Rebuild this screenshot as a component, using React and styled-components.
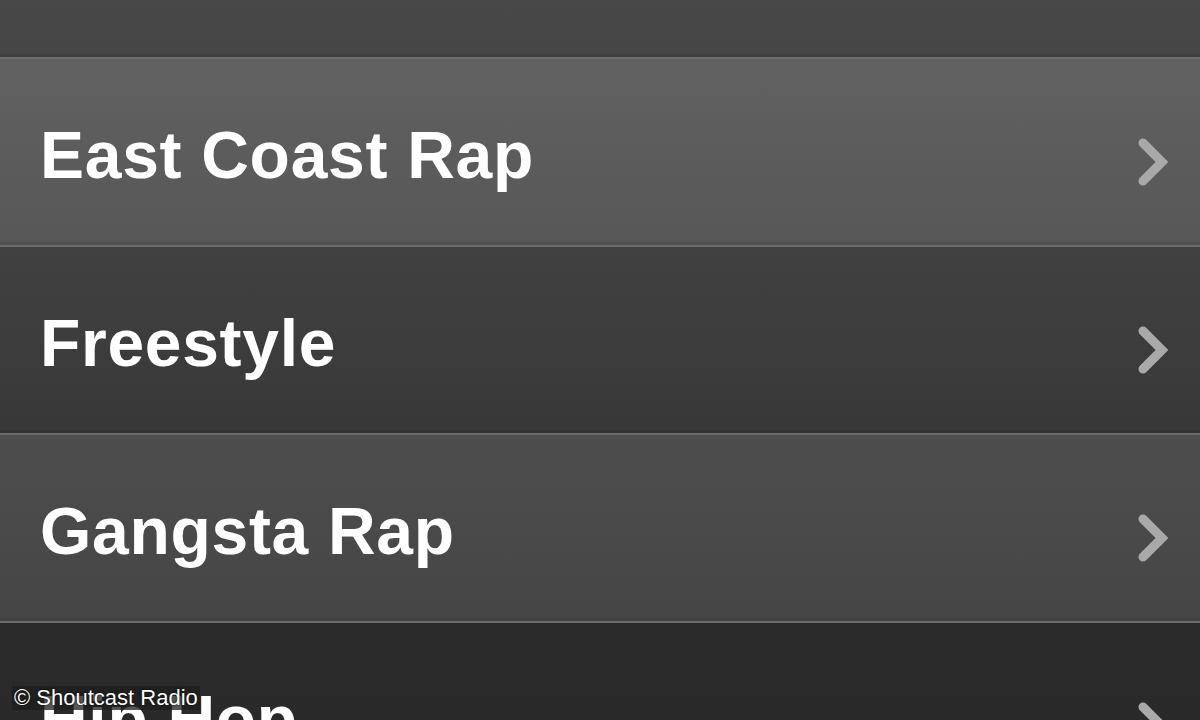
import React from 'react'
import styled, { createGlobalStyle } from 'styled-components'

const GlobalStyle = createGlobalStyle`
    html, body {
        margin: 0;
        padding: 0;
        width: 1200px;
        height: 720px;
        overflow: hidden;
        background: #2a2a2a;
        font-family: "Liberation Sans", Arial, sans-serif;
    }
`

const genres = [
    { name: 'Dirty South', tone: 'mid' },
    { name: 'East Coast Rap', tone: 'light' },
    { name: 'Freestyle', tone: 'dark' },
    { name: 'Gangsta Rap', tone: 'mid' },
    { name: 'Hip Hop', tone: 'darkest' },
]

const tones = {
    light: ['#616161', '#575757'],
    mid: ['#4d4d4d', '#464646'],
    dark: ['#414141', '#383838'],
    darkest: ['#2b2b2b', '#282828'],
}

const Chevron = () => (
    <svg width="40" height="52" viewBox="0 0 40 52">
        <path d="M10 7 L29 26 L10 45" fill="none" stroke="#a9a9a9" strokeWidth="9" strokeLinecap="round" strokeLinejoin="miter" />
    </svg>
)

const App = () => {
    return (
        <Screen>
            <GlobalStyle />
            <List>
                {genres.map((g) => (
                    <Row key={g.name} $tone={g.tone}>
                        <Label>{g.name}</Label>
                        <Arrow><Chevron /></Arrow>
                    </Row>
                ))}
            </List>
            <Credit>© Shoutcast Radio</Credit>
        </Screen>
    )
}

const Screen = styled.div`
    position: relative;
    width: 1200px;
    height: 720px;
    overflow: hidden;
    background: #2a2a2a;
`

const List = styled.div`
    display: flex;
    flex-direction: column;
    margin-top: -144px;
`

const Row = styled.div`
    flex: 0 0 188px;
    box-sizing: border-box;
    display: flex;
    align-items: center;
    justify-content: space-between;
    padding: 0 27px 0 40px;
    background: linear-gradient(${(p) => tones[p.$tone][0]}, ${(p) => tones[p.$tone][1]});
    border-top: 2px solid #6c6c6c;
    box-shadow: inset 0 -3px 0 rgba(0, 0, 0, 0.08);

    &:first-child {
        flex-basis: 201px;
    }
`

const Label = styled.div`
    color: #ffffff;
    font-family: "Liberation Sans", Arial, sans-serif;
    font-weight: 700;
    font-size: 66px;
    letter-spacing: 0.7px;
    line-height: 1;
    margin-top: 6px;
`

const Arrow = styled.div`
    display: flex;
    margin-top: 20px;
`

const Credit = styled.div`
    position: absolute;
    left: 12px;
    bottom: 10px;
    padding: 0 2px;
    color: #ffffff;
    font-family: "Liberation Sans", Arial, sans-serif;
    font-size: 22px;
    line-height: 24px;
    background: rgba(30, 30, 30, 0.75);
    text-shadow: 0 0 2px #000;
`

export default App
